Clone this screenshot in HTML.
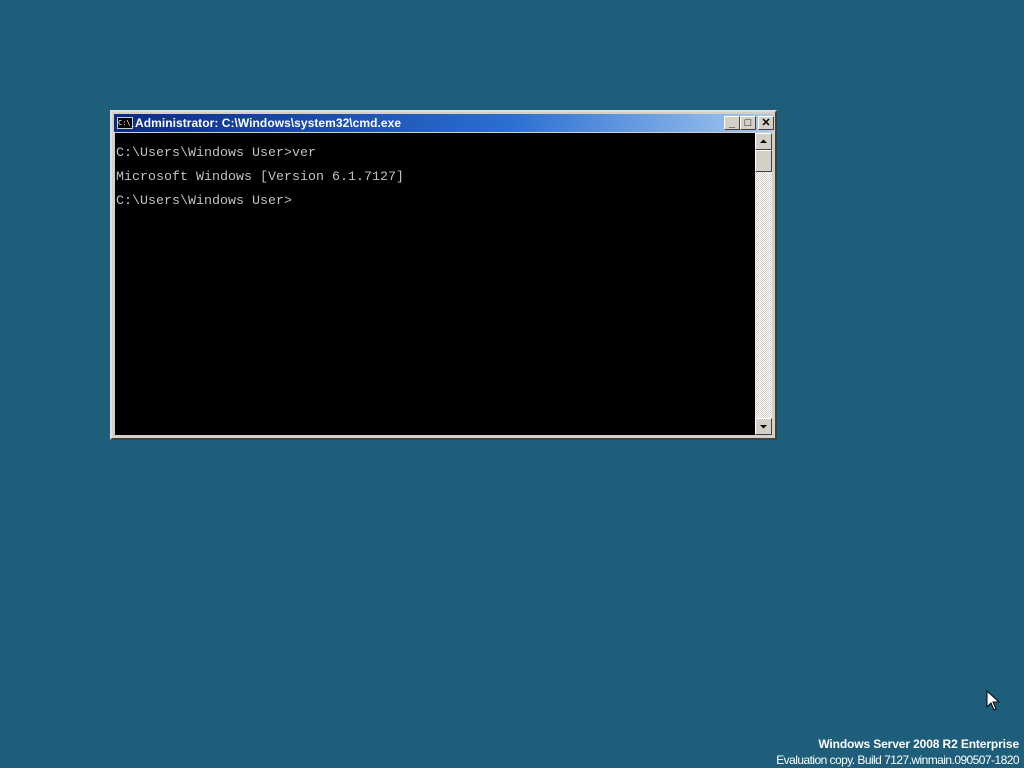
<!DOCTYPE html>
<html><head><style>
body{margin:0;width:1024px;height:768px;background:#1f5e7a;position:relative;overflow:hidden;font-family:"Liberation Sans",sans-serif}
.win{position:absolute;left:110px;top:110px;width:663px;height:326px;background:#d4d0c8;border:2px solid;border-color:#dfdfdf #404040 #404040 #dfdfdf}
.title{position:absolute;left:2px;top:2px;width:659px;height:18px;background:linear-gradient(90deg,#0a2a86,#2a6fd0 60%,#a6caf0)}
.title span{position:absolute;left:21px;top:2px;color:#fff;font-weight:bold;font-size:12px;letter-spacing:0.05px}
.ico{position:absolute;left:3px;top:3px;width:16px;height:12px;background:#000;border:1px solid #ccc;color:#fff;font-size:7px;line-height:10px;font-family:"DejaVu Sans Mono",monospace;box-sizing:border-box;text-align:center}
.btn{position:absolute;top:2px;width:16px;height:14px;background:#d4d0c8;border:1px solid;border-color:#fff #404040 #404040 #fff;box-sizing:border-box;font-size:11px;line-height:12px;text-align:center;color:#000;font-weight:bold}
.client{position:absolute;left:3px;top:21px;width:640px;height:302px;background:#000;color:#c0c0c0;font-family:"Liberation Mono",monospace;font-size:13.33px}
.client div{position:absolute;left:1px}
.sb{position:absolute;left:643px;top:21px;width:17px;height:302px;background:repeating-conic-gradient(#fff 0 25%,#d4d0c8 0 50%) 0 0/2px 2px}
.sbb{position:absolute;left:0;width:17px;height:17px;background:#d4d0c8;border:1px solid;border-color:#fff #404040 #404040 #fff;box-sizing:border-box}
.foot{position:absolute;right:5px;color:#fff;font-size:12px;text-align:right}
</style></head><body>
<div class="win">
<div class="title"><div class="ico">C:\_</div><span>Administrator: C:\Windows\system32\cmd.exe</span>
<div class="btn" style="left:610px">_</div><div class="btn" style="left:626px">□</div><div class="btn" style="left:644px">✕</div></div>
<div class="client">
<div style="top:13px">C:\Users\Windows User&gt;ver</div>
<div style="top:37px">Microsoft Windows [Version 6.1.7127]</div>
<div style="top:61px">C:\Users\Windows User&gt;</div>
</div>
<div class="sb">
<div class="sbb" style="top:0"><svg width="15" height="15"><path d="M4 9h7L7.5 5.5z" fill="#000"/></svg></div>
<div class="sbb" style="top:17px;height:22px"></div>
<div class="sbb" style="top:285px"><svg width="15" height="15"><path d="M4 6h7L7.5 9.5z" fill="#000"/></svg></div>
</div>
</div>
<svg style="position:absolute;left:986px;top:690px" width="14" height="22"><path d="M1 1v16l4-4 3 7 2-1-3-7h6z" fill="#fff" stroke="#000"/></svg>
<div class="foot" style="top:737px;font-weight:bold;letter-spacing:-0.12px">Windows Server 2008 R2 Enterprise</div>
<div class="foot" style="top:753px;letter-spacing:-0.55px">Evaluation copy. Build 7127.winmain.090507-1820</div>
</body></html>
